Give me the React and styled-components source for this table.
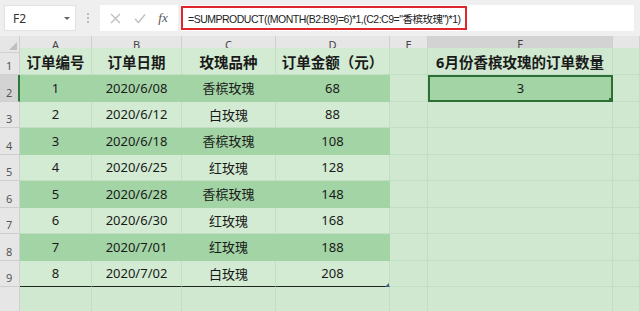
import React from 'react';
import styled, { createGlobalStyle } from 'styled-components';

const GlobalStyle = createGlobalStyle`
  html, body { margin: 0; padding: 0; background: #cfe8cf; }
  body { font-family: "Noto Sans", "Noto Sans CJK SC", sans-serif; }
`;

const COLS = '20px 72px 90px 94px 114px 38px 185px 1fr';

const Page = styled.div`
  width: 640px;
  height: 311px;
  overflow: hidden;
  background: #cfe8cf;
`;

const Toolbar = styled.div`
  height: 36px;
  background: #efefef;
  display: flex;
  align-items: center;
  padding: 0 6px 0 4px;
  box-sizing: border-box;
`;

const NameBox = styled.div`
  width: 72px;
  height: 26px;
  background: #fff;
  border: 1px solid #e2e2e2;
  box-sizing: border-box;
  display: flex;
  align-items: center;
  justify-content: space-between;
  padding: 0 5px 0 8px;
  font-size: 12px;
  color: #333;
`;

const Arrow = styled.span`
  width: 0;
  height: 0;
  border-left: 3px solid transparent;
  border-right: 3px solid transparent;
  border-top: 3px solid #666;
`;

const Dots = styled.div`
  width: 24px;
  display: flex;
  flex-direction: column;
  align-items: center;
  gap: 2px;
  span { width: 2px; height: 2px; background: #bdbdbd; }
`;

const ButtonBox = styled.div`
  width: 78px;
  height: 26px;
  background: #fff;
  display: flex;
  align-items: center;
  justify-content: space-around;
  padding: 0 4px;
  box-sizing: border-box;
  color: #b5b5b5;
`;

const Fx = styled.span`
  font-family: "Liberation Serif", serif;
  font-style: italic;
  font-size: 13px;
  color: #555;
`;

const FormulaWrap = styled.div`
  flex: 1;
  height: 26px;
  margin-left: 3px;
  background: #fff;
  display: flex;
  align-items: center;
`;

const Formula = styled.div`
  height: 24px;
  width: 286px;
  border: 2px solid #e0262b;
  box-sizing: border-box;
  display: flex;
  align-items: center;
  padding-left: 5px;
  font-family: "Liberation Sans", "Noto Sans CJK SC", sans-serif;
  font-size: 10.5px;
  letter-spacing: -0.5px;
  color: #222;
  white-space: nowrap;
`;

const Row = styled.div`
  display: grid;
  grid-template-columns: ${COLS};
  height: ${p => p.h}px;
`;

const ColHead = styled.div`
  background: ${p => (p.active ? '#d3d3d3' : '#e6e6e6')};
  border-right: 1px solid #d0d0d0;
  border-bottom: ${p => (p.active ? '2px solid #2c7a3b' : '1px solid #d0d0d0')};
  box-sizing: border-box;
  font-size: 11px;
  color: #444;
  display: flex;
  align-items: center;
  justify-content: center;
  position: relative;
`;

const Corner = styled(ColHead)`
  &::after {
    content: '';
    position: absolute;
    right: 2px;
    bottom: 2px;
    border-left: 8px solid transparent;
    border-bottom: 8px solid #bfbfbf;
  }
`;

const RowNum = styled.div`
  background: ${p => (p.active ? '#d3d3d3' : '#e6e6e6')};
  border-right: ${p => (p.active ? '2px solid #2c7a3b' : '1px solid #cfcfcf')};
  border-bottom: 1px solid #cfcfcf;
  box-sizing: border-box;
  font-size: 11px;
  color: #555;
  display: flex;
  align-items: flex-end;
  padding: 0 0 1px 6px;
`;

const Cell = styled.div`
  background: ${p => (p.tone === 'dark' ? '#a3d4a5' : p.tone === 'light' ? '#d2ebd2' : '#cfe8cf')};
  border-right: 1px solid ${p => (p.tone === 'dark' ? '#a3d4a5' : '#c3dfc3')};
  border-bottom: ${p => (p.last ? '1px solid #1e2a1e' : `1px solid ${p.tone === 'dark' ? '#a3d4a5' : '#c3dfc3'}`)};
  box-sizing: border-box;
  display: flex;
  align-items: center;
  justify-content: center;
  font-size: ${p => (p.head ? '14.5px' : '13px')};
  font-weight: ${p => (p.head ? 700 : 400)};
  color: #1a1a1a;
  white-space: nowrap;
  position: relative;
`;

const Selected = styled(Cell)`
  background: #a3d4a5;
  border: 2px solid #2c6e34;
  &::after {
    content: '';
    position: absolute;
    right: -3px;
    bottom: -3px;
    width: 5px;
    height: 5px;
    background: #2c6e34;
  }
`;

const Handle = styled.span`
  position: absolute;
  right: 0;
  bottom: -1px;
  border-left: 4px solid transparent;
  border-bottom: 4px solid #3a5a8a;
`;

const data = [
  ['1', '2020/6/08', '香槟玫瑰', '68'],
  ['2', '2020/6/12', '白玫瑰', '88'],
  ['3', '2020/6/18', '香槟玫瑰', '108'],
  ['4', '2020/6/25', '红玫瑰', '128'],
  ['5', '2020/6/28', '香槟玫瑰', '148'],
  ['6', '2020/6/30', '红玫瑰', '168'],
  ['7', '2020/7/01', '红玫瑰', '188'],
  ['8', '2020/7/02', '白玫瑰', '208'],
];

const XIcon = () => (
  <svg width="11" height="11" viewBox="0 0 11 11">
    <path d="M1 1L10 10M10 1L1 10" stroke="#bdbdbd" strokeWidth="1.3" fill="none" />
  </svg>
);

const CheckIcon = () => (
  <svg width="12" height="11" viewBox="0 0 12 11">
    <path d="M1 6L4.5 9.5L11 1.5" stroke="#bdbdbd" strokeWidth="1.3" fill="none" />
  </svg>
);

export default function App() {
  return (
    <Page>
      <GlobalStyle />
      <Toolbar>
        <NameBox>F2<Arrow /></NameBox>
        <Dots><span /><span /><span /></Dots>
        <ButtonBox>
          <XIcon />
          <CheckIcon />
          <Fx>fx</Fx>
        </ButtonBox>
        <FormulaWrap>
          <Formula>=SUMPRODUCT((MONTH(B2:B9)=6)*1,(C2:C9="香槟玫瑰")*1)</Formula>
        </FormulaWrap>
      </Toolbar>
      <Row h={12}>
        <Corner />
        <ColHead>A</ColHead>
        <ColHead>B</ColHead>
        <ColHead>C</ColHead>
        <ColHead>D</ColHead>
        <ColHead>E</ColHead>
        <ColHead active>F</ColHead>
        <ColHead />
      </Row>
      <Row h={27}>
        <RowNum>1</RowNum>
        <Cell tone="light" head>订单编号</Cell>
        <Cell tone="light" head>订单日期</Cell>
        <Cell tone="light" head>玫瑰品种</Cell>
        <Cell tone="light" head>订单金额（元）</Cell>
        <Cell />
        <Cell head>6月份香槟玫瑰的订单数量</Cell>
        <Cell />
      </Row>
      {data.map((r, i) => {
        const tone = i % 2 === 0 ? 'dark' : 'light';
        const last = i === data.length - 1;
        return (
          <Row h={26.5} key={r[0]}>
            <RowNum active={i === 0}>{i + 2}</RowNum>
            {r.map((v, j) => (
              <Cell tone={tone} last={last} key={j}>
                {v}
                {last && j === 3 && <Handle />}
              </Cell>
            ))}
            <Cell />
            {i === 0 ? <Selected>3</Selected> : <Cell />}
            <Cell />
          </Row>
        );
      })}
      <Row h={26.5}>
        <RowNum />
        <Cell />
        <Cell />
        <Cell />
        <Cell />
        <Cell />
        <Cell />
        <Cell />
      </Row>
    </Page>
  );
}
